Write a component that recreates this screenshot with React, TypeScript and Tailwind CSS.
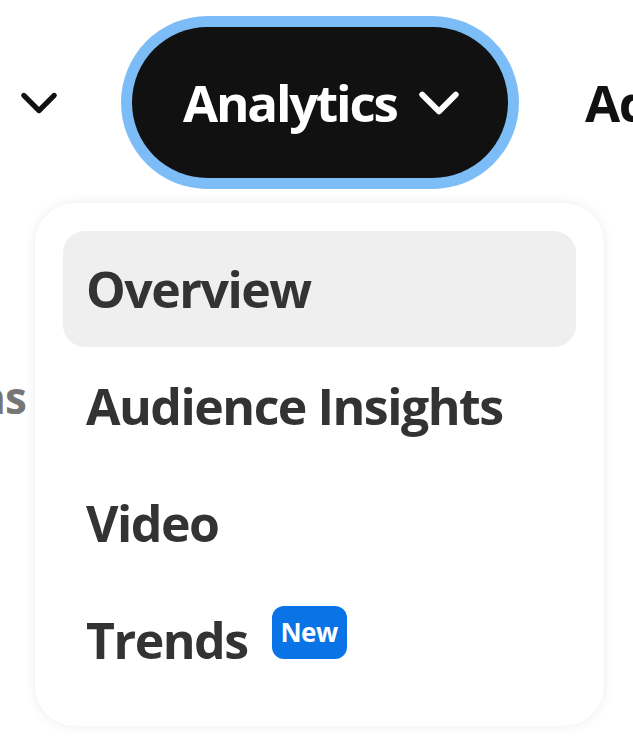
import React from 'react';

const Chevron = ({ className }: { className?: string }) => (
  <svg viewBox="0 0 40 24" className={className} fill="none" stroke="currentColor" strokeWidth={5.5} strokeLinecap="round" strokeLinejoin="round">
    <path d="M4 4 L20 20 L36 4" />
  </svg>
);

const items = ['Overview', 'Audience Insights', 'Video', 'Trends'];

const App: React.FC = () => {
  return (
    <div
      className="relative w-[633px] h-[739px] overflow-hidden bg-white"
      style={{ fontFamily: '"Open Sans", "Noto Sans", sans-serif' }}
    >
      {/* nav row */}
      <nav className="flex items-center pl-[20px] pt-[27px] whitespace-nowrap">
        <Chevron className="shrink-0 w-[38px] h-[24px] text-[#111]" />
        <button className="shrink-0 ml-[74px] flex items-center h-[151px] w-[376px] pl-[51px] rounded-full bg-[#111] ring-[11px] ring-[#7cbdf7] text-white">
          <span className="text-[51px] font-bold leading-none tracking-[-2.2px]">Analytics</span>
          <Chevron className="shrink-0 ml-[21px] w-[42px] h-[26px] text-white" />
        </button>
        <span className="shrink-0 ml-[77px] text-[51px] font-bold leading-none text-[#111] tracking-[-1.5px]">Ads</span>
      </nav>

      {/* page content under the menu */}
      <div className="mt-[197px] -ml-[62px] text-[44px] font-bold text-[#767676] leading-none tracking-[-1px]">Pins</div>

      {/* dropdown */}
      <div className="absolute left-[35px] top-[203px] w-[569px] rounded-[40px] bg-white p-[28px] shadow-[0_0_12px_rgba(0,0,0,0.08)]">
        <ul className="flex flex-col">
          {items.map((label, i) => (
            <li
              key={label}
              className={
                i === 0
                  ? 'flex items-center h-[116px] pl-[23px] rounded-[22px] bg-[#efefef]'
                  : 'flex items-center h-[117px] pl-[23px] rounded-[22px]'
              }
            >
              <span className="text-[50px] font-bold leading-none text-[#333] tracking-[-1.5px]">{label}</span>
              {label === 'Trends' && (
                <span className="ml-[24px] -mt-[15px] flex items-center justify-center w-[75px] h-[53px] rounded-[12px] bg-[#0a74e6] text-white text-[26px] font-bold leading-none tracking-[-0.5px]">
                  New
                </span>
              )}
            </li>
          ))}
        </ul>
      </div>
    </div>
  );
};

export default App;
